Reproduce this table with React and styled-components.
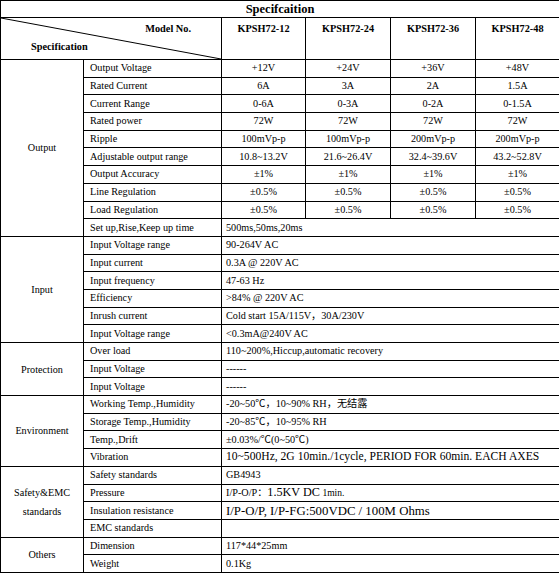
import React from "react";
import styled, { createGlobalStyle } from "styled-components";

const Global = createGlobalStyle`
  html, body { margin: 0; padding: 0; background: #fff; }
  body { font-family: "Liberation Serif", "Noto Sans CJK SC", serif; color: #000; }
`;

const Table = styled.table`
  border-collapse: collapse;
  table-layout: fixed;
  width: 559px;
  font-size: 10.2px;
  line-height: 12px;
`;

const Col = styled.col`
  width: ${(p) => p.$w}px;
`;

const TitleCell = styled.th`
  height: 16px;
  padding: 0;
  border: 1px solid #000;
  font-size: 12.5px;
  font-weight: bold;
  text-align: center;
  vertical-align: middle;
`;

const HeaderRow = styled.tr`
  height: 42px;
`;

const DiagCell = styled.th`
  position: relative;
  padding: 0;
  border: 1px solid #000;
  font-weight: bold;
  font-size: 10.3px;
  vertical-align: top;
`;

const DiagLine = styled.svg`
  position: absolute;
  inset: 0;
  width: 100%;
  height: 100%;
  overflow: visible;
`;

const DiagText = styled.div`
  display: flex;
  flex-direction: column;
  padding: 5px 30px 0 30px;
  gap: 6px;
`;

const DiagTop = styled.span`
  text-align: right;
`;

const DiagBottom = styled.span`
  text-align: left;
`;

const ModelCell = styled.th`
  padding: 5px 0 0;
  border: 1px solid #000;
  font-weight: bold;
  font-size: 10.3px;
  text-align: center;
  vertical-align: top;
`;

const Row = styled.tr`
  height: 17.7px;
`;

const GroupCell = styled.td`
  padding: 0 2px;
  border: 1px solid #000;
  text-align: center;
  vertical-align: middle;
  line-height: 19px;
`;

const LabelCell = styled.td`
  padding: 0 0 0 6px;
  border: 1px solid #000;
  white-space: nowrap;
  vertical-align: middle;
`;

const ValueCell = styled.td`
  padding: 0;
  border: 1px solid #000;
  text-align: center;
  white-space: nowrap;
  vertical-align: middle;
`;

const SpanCell = styled.td`
  padding: 0 0 0 4px;
  border: 1px solid #000;
  white-space: nowrap;
  vertical-align: middle;
  font-size: ${(p) => (p.$size ? `${p.$size}px` : "inherit")};
`;

const Big = styled.span`
  font-size: 12.2px;
`;

const Small = styled.span`
  font-size: 9.5px;
`;

const sections = [
  {
    name: "Output",
    rows: [
      { label: "Output Voltage", values: ["+12V", "+24V", "+36V", "+48V"] },
      { label: "Rated Current", values: ["6A", "3A", "2A", "1.5A"] },
      { label: "Current Range", values: ["0-6A", "0-3A", "0-2A", "0-1.5A"] },
      { label: "Rated power", values: ["72W", "72W", "72W", "72W"] },
      { label: "Ripple", values: ["100mVp-p", "100mVp-p", "200mVp-p", "200mVp-p"] },
      {
        label: "Adjustable output range",
        values: ["10.8~13.2V", "21.6~26.4V", "32.4~39.6V", "43.2~52.8V"],
      },
      { label: "Output Accuracy", values: ["±1%", "±1%", "±1%", "±1%"] },
      { label: "Line Regulation", values: ["±0.5%", "±0.5%", "±0.5%", "±0.5%"] },
      { label: "Load Regulation", values: ["±0.5%", "±0.5%", "±0.5%", "±0.5%"] },
      { label: "Set up,Rise,Keep up time", span: "500ms,50ms,20ms" },
    ],
  },
  {
    name: "Input",
    rows: [
      { label: "Input Voltage range", span: "90-264V AC" },
      { label: "Input current", span: "0.3A @ 220V AC" },
      { label: "Input frequency", span: "47-63 Hz" },
      { label: "Efficiency", span: ">84% @ 220V AC" },
      { label: "Inrush current", span: "Cold start 15A/115V，30A/230V" },
      { label: "Input Voltage range", span: "<0.3mA@240V AC" },
    ],
  },
  {
    name: "Protection",
    rows: [
      { label: "Over load", span: "110~200%,Hiccup,automatic recovery" },
      { label: "Input Voltage", span: "------" },
      { label: "Input Voltage", span: "------" },
    ],
  },
  {
    name: "Environment",
    rows: [
      { label: "Working Temp.,Humidity", span: "-20~50℃，10~90% RH，无结露" },
      { label: "Storage Temp.,Humidity", span: "-20~85℃，10~95% RH" },
      { label: "Temp.,Drift", span: "±0.03%/℃(0~50℃)" },
      {
        label: "Vibration",
        span: "10~500Hz, 2G 10min./1cycle, PERIOD FOR 60min. EACH AXES",
        size: 11.6,
      },
    ],
  },
  {
    name: (
      <>
        Safety&amp;EMC
        <br />
        standards
      </>
    ),
    rows: [
      { label: "Safety standards", span: "GB4943" },
      {
        label: "Pressure",
        span: (
          <>
            I/P-O/P：<Big>1.5KV DC</Big> <Small>1min.</Small>
          </>
        ),
      },
      {
        label: "Insulation resistance",
        span: "I/P-O/P, I/P-FG:500VDC / 100M Ohms",
        size: 12.8,
      },
      { label: "EMC standards", span: "" },
    ],
  },
  {
    name: "Others",
    rows: [
      { label: "Dimension", span: "117*44*25mm" },
      { label: "Weight", span: "0.1Kg" },
    ],
  },
];

const models = ["KPSH72-12", "KPSH72-24", "KPSH72-36", "KPSH72-48"];
const widths = [83, 138, 84, 85, 85, 84];

export default function App() {
  return (
    <>
      <Global />
      <Table>
        <colgroup>
          {widths.map((w, i) => (
            <Col key={i} $w={w} />
          ))}
        </colgroup>
        <thead>
          <tr>
            <TitleCell colSpan={6}>Specifcaition</TitleCell>
          </tr>
          <HeaderRow>
            <DiagCell colSpan={2}>
              <DiagLine preserveAspectRatio="none" viewBox="0 0 100 100">
                <line
                  x1="0"
                  y1="0"
                  x2="100"
                  y2="100"
                  stroke="#000"
                  strokeWidth="1"
                  vectorEffect="non-scaling-stroke"
                />
              </DiagLine>
              <DiagText>
                <DiagTop>Model No.</DiagTop>
                <DiagBottom>Specification</DiagBottom>
              </DiagText>
            </DiagCell>
            {models.map((m) => (
              <ModelCell key={m}>{m}</ModelCell>
            ))}
          </HeaderRow>
        </thead>
        <tbody>
          {sections.map((sec, si) =>
            sec.rows.map((r, ri) => (
              <Row key={`${si}-${ri}`}>
                {ri === 0 && (
                  <GroupCell rowSpan={sec.rows.length}>{sec.name}</GroupCell>
                )}
                <LabelCell>{r.label}</LabelCell>
                {r.values ? (
                  r.values.map((v, vi) => <ValueCell key={vi}>{v}</ValueCell>)
                ) : (
                  <SpanCell colSpan={4} $size={r.size}>
                    {r.span}
                  </SpanCell>
                )}
              </Row>
            ))
          )}
        </tbody>
      </Table>
    </>
  );
}
